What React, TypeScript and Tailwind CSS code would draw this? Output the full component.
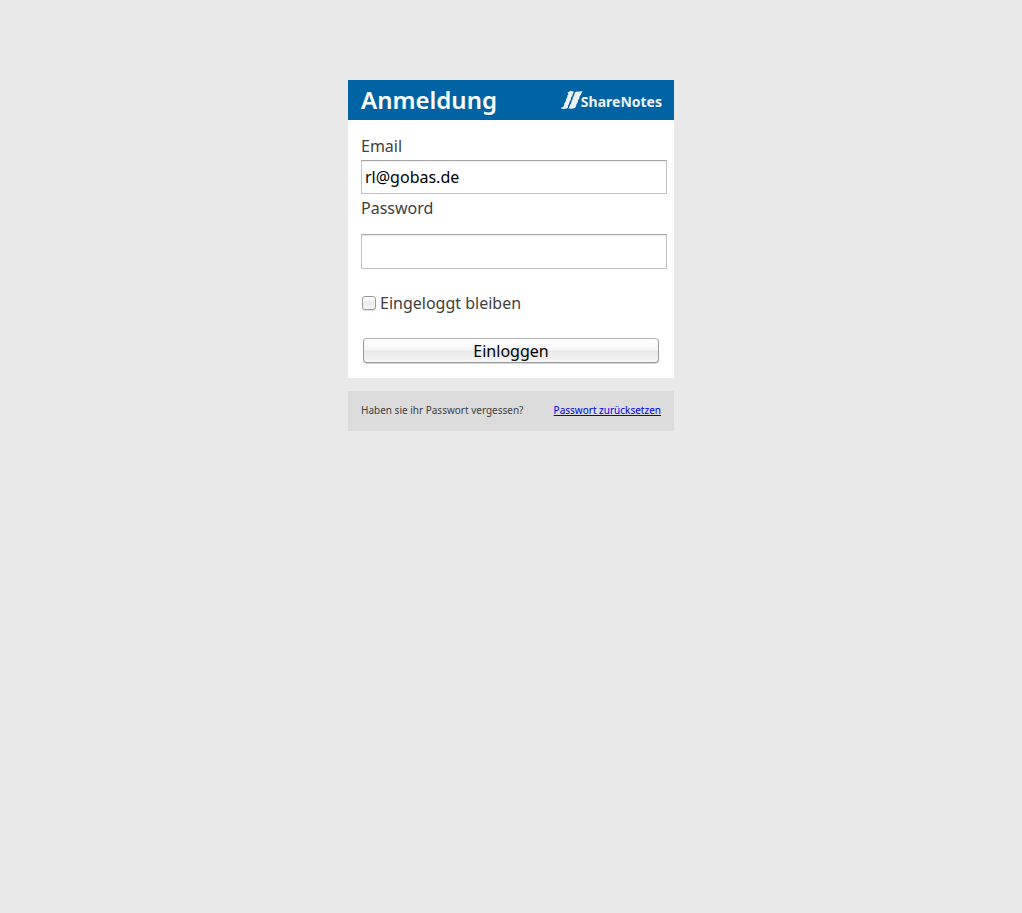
import { useState } from "react";

function Logo() {
  return (
    <div className="flex items-end pt-0.5 text-[#eef2f7]">
      <svg className="mb-0.5" width="22" height="20" viewBox="0 0 22 20" fill="currentColor" aria-hidden="true">
        <path d="m6.500 2.200 2-.4L9.800.6l.9.700 2.300.2-1 1.900-.7 2.300-1.300 2-.2 2-1.200 2-.6 2.300-1.100 1.800.2 1.500-1.300 1.200-1.900.2-1.600.3L0 18.500l.5-1.100 1.700-.3 1-2.100.2-1.500L4.800 11l.4-1.900 1.100-2 .1-1.500 1.100-1.700Z" />
        <path d="m14.300 2.300 1.400-.7 1.800.2 1.600-.6 2.700.3-1.200 1.300-.7 1.900-1.400 1.800-.1 1.700-1.200 1.900-.4 2.200-1.400 2-.2 1.800-1.300 2-1.800.3-1.700.3-2.800-.2.900-1.900.5-1.700 1.200-1.700.2-1.700 1.200-2.300.3-1.700 1.300-2 .1-1.500Z" />
      </svg>
      <span className="-ml-0.5 text-sm font-bold leading-5">ShareNotes</span>
    </div>
  );
}

const fieldClass =
  "block w-full border border-[#c3c3c3] border-t-[#a5a5a5] bg-white px-[3px] text-base text-black shadow-[inset_0_1px_1px_#ececec] outline-none";

export default function App() {
  const [email, setEmail] = useState("rl@gobas.de");
  const [password, setPassword] = useState("");
  const [stay, setStay] = useState(false);

  return (
    <div className="flex min-h-screen justify-center bg-[#e9e9e9] pt-20 font-['Noto_Sans','Open_Sans',sans-serif] text-base text-[#404040]">
      <main className="flex w-full max-w-[326px] flex-col gap-[13px]">
        <section className="bg-white">
          <header className="flex h-10 items-center justify-between bg-[#0064a4] pr-3 pl-[13px]">
            <h1 className="text-2xl font-semibold text-white">Anmeldung</h1>
            <Logo />
          </header>
          <form className="pt-[13px] pr-[7px] pb-[15px] pl-[13px]" onSubmit={(e) => e.preventDefault()}>
            <label htmlFor="email" className="block leading-[27px]">
              Email
            </label>
            <input
              id="email"
              type="email"
              value={email}
              onChange={(e) => setEmail(e.target.value)}
              className={`${fieldClass} h-[34px]`}
            />
            <label htmlFor="password" className="mb-3 block leading-7">
              Password
            </label>
            <input
              id="password"
              type="password"
              value={password}
              onChange={(e) => setPassword(e.target.value)}
              className={`${fieldClass} h-[35px]`}
            />
            <div className="mt-5 flex h-7 items-center gap-1 pl-px">
              <input
                id="stay"
                type="checkbox"
                checked={stay}
                onChange={(e) => setStay(e.target.checked)}
                className="size-3.5 appearance-none rounded-[3px] border border-[#999] bg-linear-to-b from-white via-[#ececec] to-[#f8f8f8] shadow-[0_1px_1px_#ddd] checked:bg-[#0064a4] checked:bg-none"
              />
              <label htmlFor="stay">Eingeloggt bleiben</label>
            </div>
            <div className="mt-[21px] pr-2 pl-0.5">
              <button
                type="submit"
                className="flex h-[25px] w-full items-center justify-center rounded-[4px] border border-[#9a9a9a] border-t-[#b4b4b4] bg-[linear-gradient(#ffffff,#f5f5f5_48%,#e8e8e8_52%,#f5f5f5)] text-base text-black shadow-[0_1px_1px_#d5d5d5]"
              >
                Einloggen
              </button>
            </div>
          </form>
        </section>
        <footer className="flex h-10 items-center justify-between bg-[#dcdcdc] px-[13px] pb-0.5 text-[10px]">
          <span>Haben sie ihr Passwort vergessen?</span>
          <a href="#reset" className="text-[#0000ee] underline">
            Passwort zurücksetzen
          </a>
        </footer>
      </main>
    </div>
  );
}
